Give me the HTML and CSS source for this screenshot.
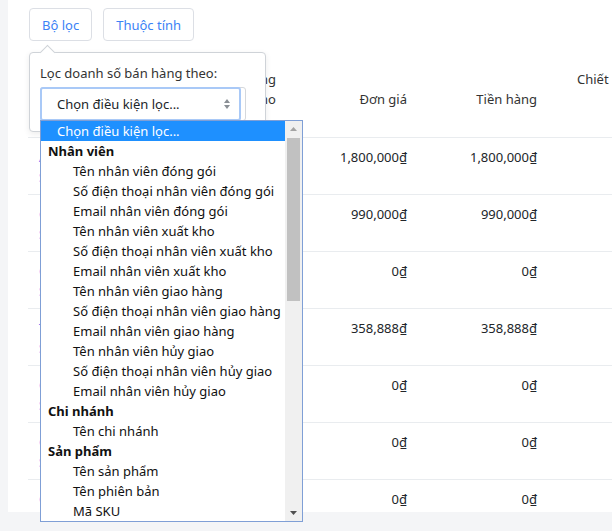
FILE: index.html
```html
<!DOCTYPE html>
<html lang="vi">
<head>
    <meta charset="UTF-8">
    <title>Doanh số bán hàng</title>
    <link rel="stylesheet" href="styles.css">
</head>
<body>
    <div class="panel">
        <div class="toolbar">
            <button class="tool-btn">Bộ lọc</button>
            <button class="tool-btn">Thuộc tính</button>
        </div>

        <div class="table-wrap">
            <table class="report">
                <colgroup>
                    <col style="width: 132px">
                    <col style="width: 126px">
                    <col style="width: 131px">
                    <col style="width: 130px">
                    <col style="width: 160px">
                </colgroup>
                <thead>
                    <tr>
                        <th class="left">Sản phẩm</th>
                        <th>Số lượng<br>tồn kho</th>
                        <th>Đơn giá</th>
                        <th>Tiền hàng</th>
                        <th class="top">Chiết khấu</th>
                    </tr>
                </thead>
                <tbody>
                    <tr><td class="left"><a>Áo sơ mi nam</a><br><a>SKU-001</a></td><td>1</td><td>1,800,000₫</td><td>1,800,000₫</td><td></td></tr>
                    <tr><td class="left"><a>Giày thể thao</a><br><a>SKU-002</a></td><td>1</td><td>990,000₫</td><td>990,000₫</td><td></td></tr>
                    <tr><td class="left"><a>Quà tặng</a><br><a>SKU-003</a></td><td>1</td><td>0₫</td><td>0₫</td><td></td></tr>
                    <tr><td class="left"><a>Túi xách</a><br><a>SKU-004</a></td><td>1</td><td>358,888₫</td><td>358,888₫</td><td></td></tr>
                    <tr><td class="left"><a>Quà tặng</a><br><a>SKU-005</a></td><td>1</td><td>0₫</td><td>0₫</td><td></td></tr>
                    <tr><td class="left"><a>Quà tặng</a><br><a>SKU-006</a></td><td>1</td><td>0₫</td><td>0₫</td><td></td></tr>
                    <tr><td class="left"><a>Quà tặng</a><br><a>SKU-007</a></td><td>1</td><td>0₫</td><td>0₫</td><td></td></tr>
                </tbody>
            </table>
        </div>

        <div class="popover">
            <div class="popover-label">Lọc doanh số bán hàng theo:</div>
            <div class="select-wrap">
                <div class="select">
                    <span>Chọn điều kiện lọc...</span>
                    <svg class="select-arrows" width="8" height="12" viewBox="0 0 8 12">
                        <path d="M4 1 L7 5 L1 5 Z" fill="#8a8f95"/>
                        <path d="M4 11 L7 7 L1 7 Z" fill="#8a8f95"/>
                    </svg>
                </div>
            </div>
        </div>

        <div class="listbox">
            <div class="options">
                <div class="opt selected">Chọn điều kiện lọc...</div>
                <div class="group">Nhân viên</div>
                <div class="opt">Tên nhân viên đóng gói</div>
                <div class="opt">Số điện thoại nhân viên đóng gói</div>
                <div class="opt">Email nhân viên đóng gói</div>
                <div class="opt">Tên nhân viên xuất kho</div>
                <div class="opt">Số điện thoại nhân viên xuất kho</div>
                <div class="opt">Email nhân viên xuất kho</div>
                <div class="opt">Tên nhân viên giao hàng</div>
                <div class="opt">Số điện thoại nhân viên giao hàng</div>
                <div class="opt">Email nhân viên giao hàng</div>
                <div class="opt">Tên nhân viên hủy giao</div>
                <div class="opt">Số điện thoại nhân viên hủy giao</div>
                <div class="opt">Email nhân viên hủy giao</div>
                <div class="group">Chi nhánh</div>
                <div class="opt">Tên chi nhánh</div>
                <div class="group">Sản phẩm</div>
                <div class="opt">Tên sản phẩm</div>
                <div class="opt">Tên phiên bản</div>
                <div class="opt">Mã SKU</div>
                <div class="opt">Mã vạch</div>
                <div class="opt">Loại sản phẩm</div>
                <div class="opt">Nhãn hiệu</div>
            </div>
            <div class="scrollbar">
                <svg class="scroll-arrow" width="17" height="17" viewBox="0 0 17 17">
                    <path d="M8.5 6 L12 10 L5 10 Z" fill="#a3a3a3"/>
                </svg>
                <div class="scroll-track">
                    <div class="scroll-thumb"></div>
                </div>
                <svg class="scroll-arrow" width="17" height="17" viewBox="0 0 17 17">
                    <path d="M8.5 11 L12 7 L5 7 Z" fill="#505050"/>
                </svg>
            </div>
        </div>
    </div>
</body>
</html>
```

FILE: styles.css
```css
body {
    font-family: "Noto Sans", "Open Sans", sans-serif;
    font-size: 13px;
    margin: 0;
    background-color: #f4f5f7;
    color: #212529;
    overflow: hidden;
    height: 531px;
}
.panel {
    position: relative;
    margin-left: 8px;
    height: 512px;
    background-color: #fff;
    padding-left: 20px;
}
.toolbar {
    display: flex;
    gap: 11px;
    padding-top: 8px;
    padding-left: 1px;
}
.tool-btn {
    font-family: inherit;
    font-size: 13px;
    height: 33px;
    padding: 0 12px;
    background-color: #fff;
    color: #3b82f6;
    border: 1px solid #dcdfe5;
    border-radius: 4px;
}
.table-wrap {
    margin-top: 11px;
    height: 460px;
    overflow: hidden;
}
.report {
    table-layout: fixed;
    border-collapse: collapse;
    width: 679px;
    line-height: 20px;
}
.report th {
    height: 57px;
    padding: 0 10px 28px;
    font-weight: normal;
    text-align: right;
    vertical-align: bottom;
    color: #333;
    border-bottom: 1px solid #e9ecef;
}
.report th.top {
    text-align: left;
    vertical-align: top;
    padding: 17px 0 0 30px;
    white-space: nowrap;
}
.report th.left,
.report td.left {
    text-align: left;
    padding-left: 11px;
}
.report td {
    height: 47px;
    padding: 9px 10px 0;
    text-align: right;
    vertical-align: top;
    border-bottom: 1px solid #e9ecef;
}
.report td a {
    color: #6366f1;
}
.popover {
    position: absolute;
    left: 21px;
    top: 52px;
    width: 215px;
    padding: 10px;
    background-color: #fff;
    border: 1px solid #cfd3d8;
    border-radius: 4px;
    box-shadow: 0 2px 6px rgba(0, 0, 0, 0.08);
}
.popover::before {
    content: "";
    position: absolute;
    left: 12px;
    top: -6px;
    width: 10px;
    height: 10px;
    background-color: #fff;
    border-left: 1px solid #cfd3d8;
    border-top: 1px solid #cfd3d8;
    transform: rotate(45deg);
}
.popover-label {
    line-height: 20px;
    color: #333;
    margin-bottom: 4px;
}
.select-wrap {
    width: 204px;
    border: 1px solid #d5d8dc;
    border-radius: 3px;
}
.select {
    box-sizing: border-box;
    width: 201px;
    height: 34px;
    margin: -1px;
    display: flex;
    align-items: center;
    justify-content: space-between;
    padding: 0 8px 0 15px;
    border: 2px solid #a9c9f7;
    border-radius: 3px;
    color: #212529;
}
.select-arrows {
    display: block;
}
.listbox {
    position: absolute;
    left: 32px;
    top: 120px;
    width: 261px;
    height: 400px;
    display: flex;
    background-color: #fff;
    border: 1px solid #7f9fd6;
    z-index: 10;
}
.options {
    flex: 1;
    min-width: 0;
    overflow: hidden;
    line-height: 20px;
    color: #111;
}
.opt {
    padding-left: 32px;
    white-space: nowrap;
}
.opt.selected {
    padding-left: 16px;
    background-color: #1e90ff;
    color: #fff;
}
.group {
    padding-left: 7px;
    font-weight: bold;
}
.scrollbar {
    width: 17px;
    display: flex;
    flex-direction: column;
    background-color: #f0f0f0;
}
.scroll-arrow {
    display: block;
}
.scroll-track {
    flex: 1;
    padding: 0 2px;
}
.scroll-thumb {
    height: 163px;
    background-color: #c1c1c1;
}
```
